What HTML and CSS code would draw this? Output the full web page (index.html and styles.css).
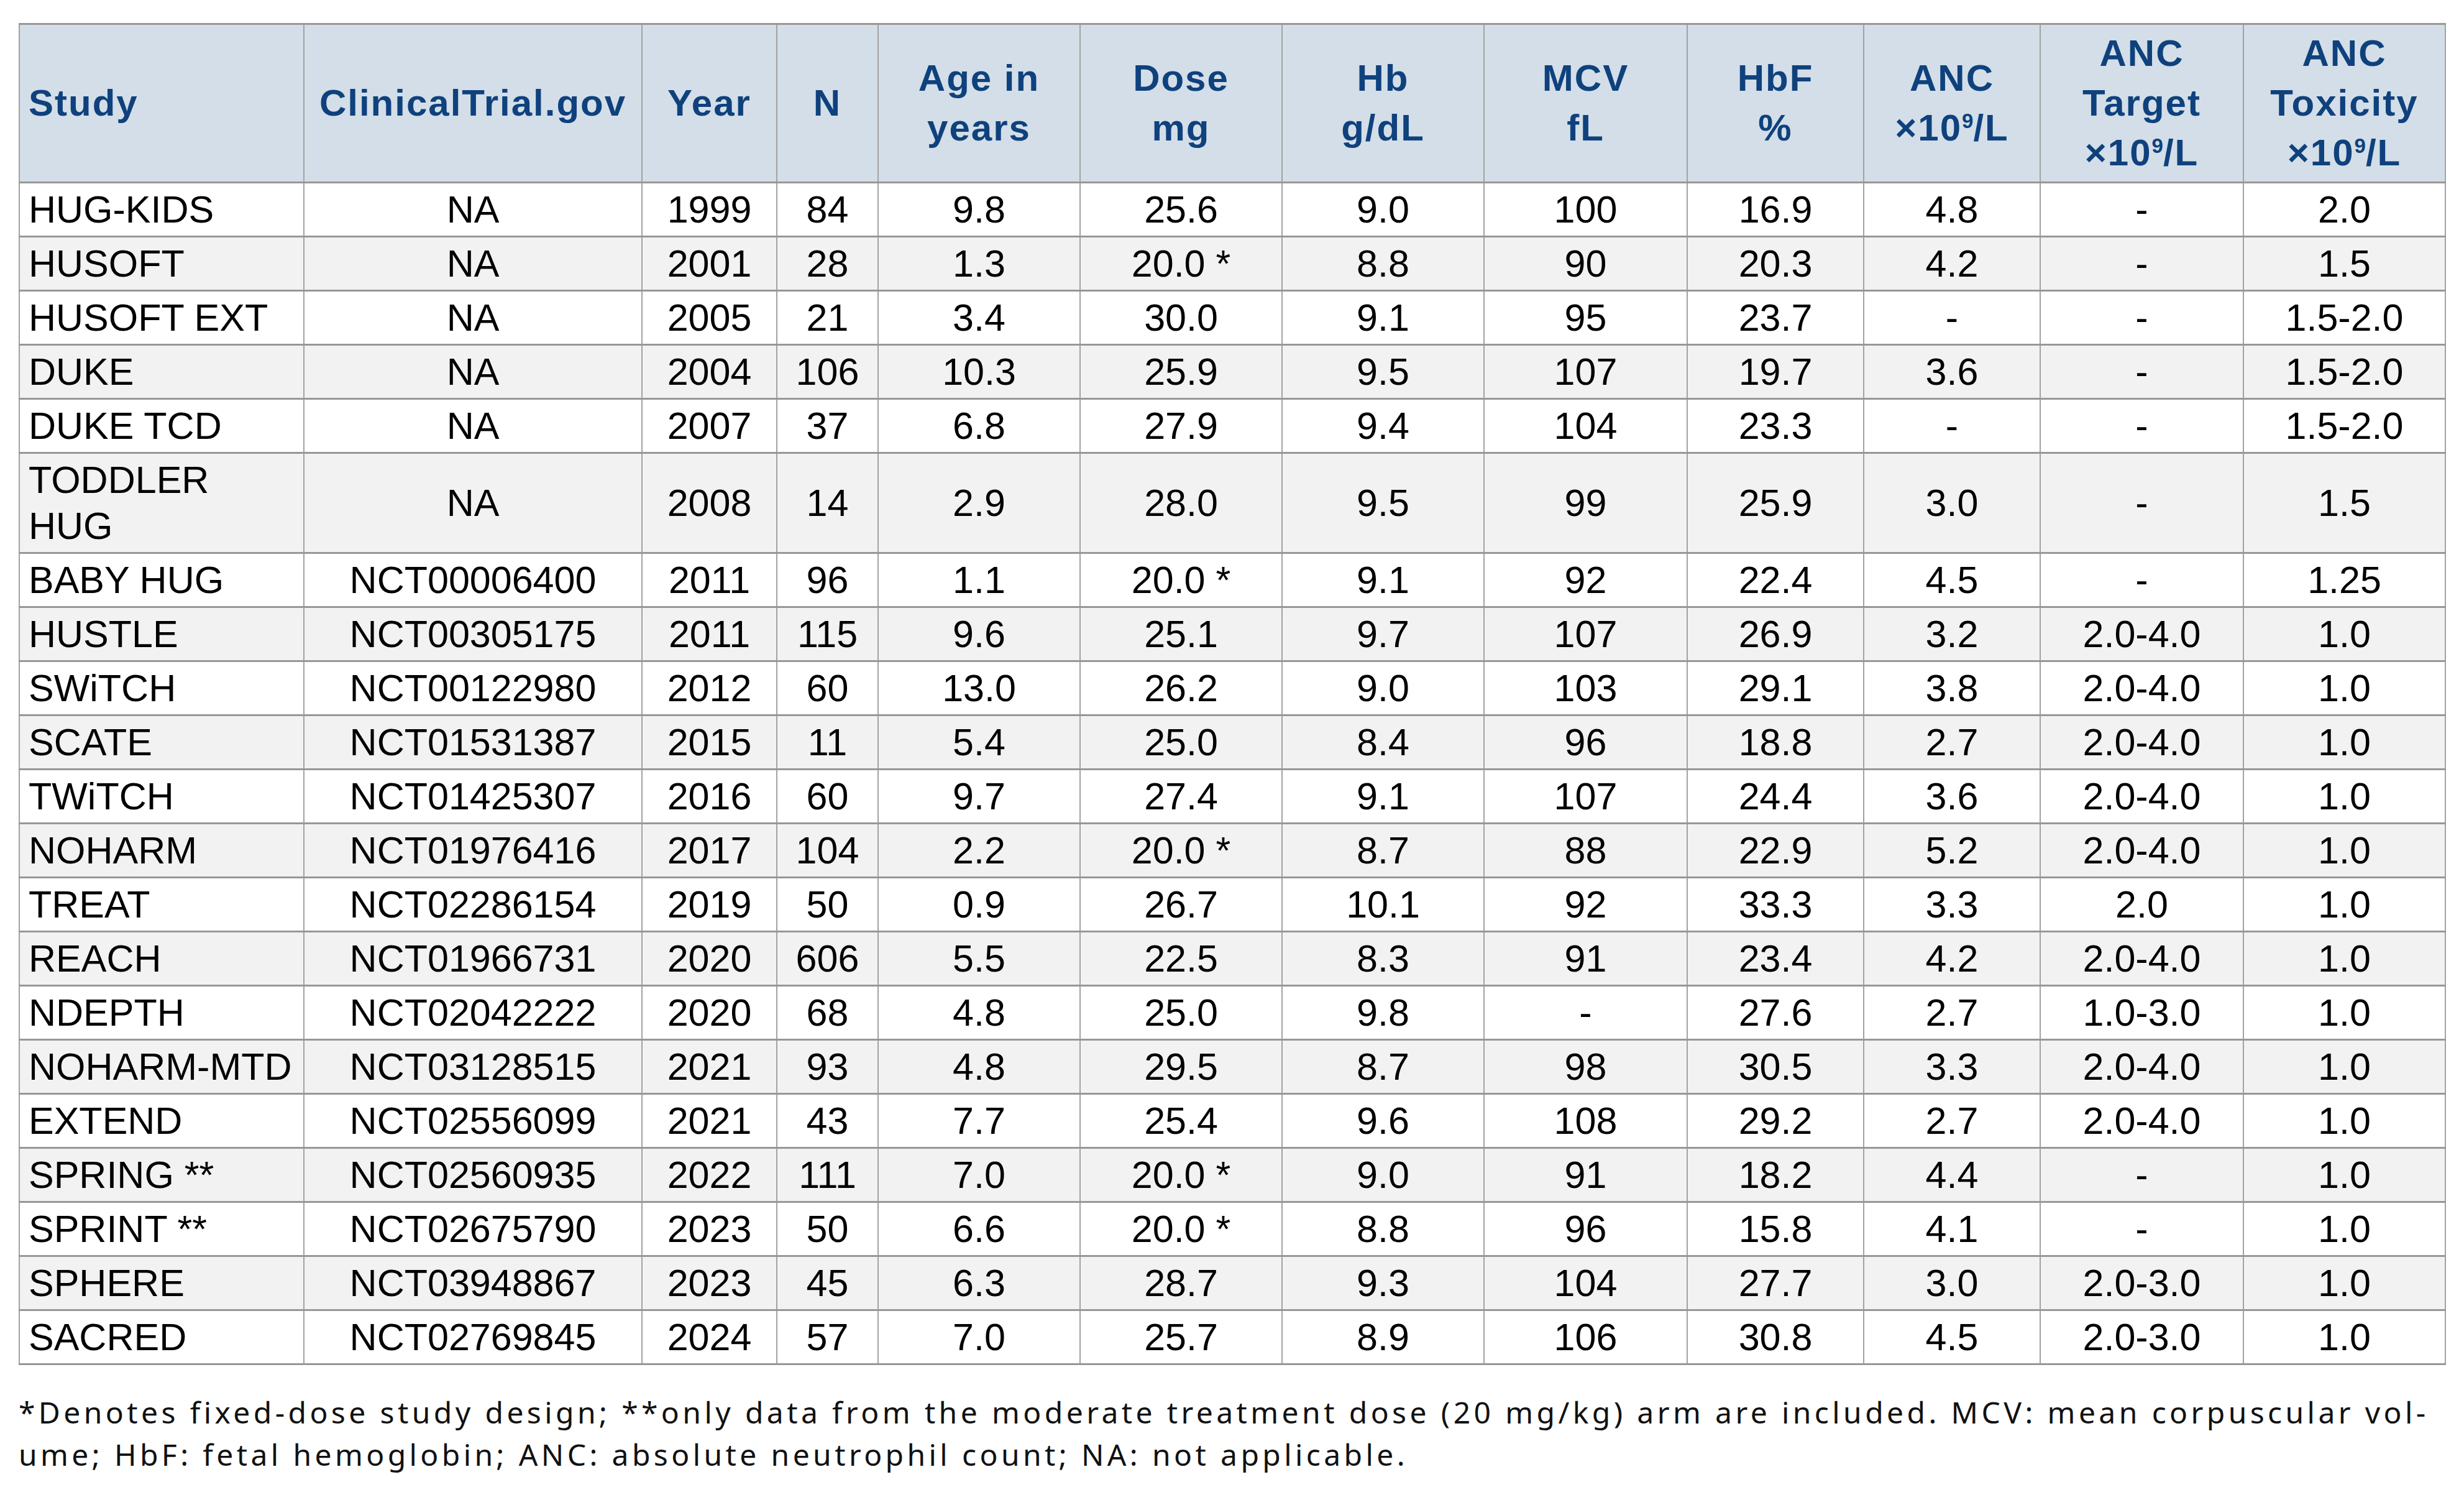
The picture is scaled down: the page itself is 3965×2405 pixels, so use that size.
FILE: index.html
```html
<!DOCTYPE html>
<html lang="en">
<head>
<meta charset="utf-8">
<title>Hydroxyurea pediatric studies</title>
<link rel="stylesheet" href="styles.css">
</head>
<body>
<div class="page">
<table class="trials">
<colgroup>
<col class="c-study"><col class="c-ct"><col class="c-year"><col class="c-n">
<col class="c-age"><col class="c-dose"><col class="c-hb"><col class="c-mcv">
<col class="c-hbf"><col class="c-anc"><col class="c-target"><col class="c-tox">
</colgroup>
<thead>
<tr>
<th class="left">Study</th>
<th>ClinicalTrial.gov</th>
<th>Year</th>
<th>N</th>
<th>Age in<br>years</th>
<th>Dose<br>mg</th>
<th>Hb<br>g/dL</th>
<th>MCV<br>fL</th>
<th>HbF<br>%</th>
<th>ANC<br>×10<sup class="sup">9</sup>/L</th>
<th>ANC<br>Target<br>×10<sup class="sup">9</sup>/L</th>
<th>ANC<br>Toxicity<br>×10<sup class="sup">9</sup>/L</th>
</tr>
</thead>
<tbody>
<tr><td class="left">HUG-KIDS</td><td>NA</td><td>1999</td><td>84</td><td>9.8</td><td>25.6</td><td>9.0</td><td>100</td><td>16.9</td><td>4.8</td><td>-</td><td>2.0</td></tr>
<tr><td class="left">HUSOFT</td><td>NA</td><td>2001</td><td>28</td><td>1.3</td><td>20.0 *</td><td>8.8</td><td>90</td><td>20.3</td><td>4.2</td><td>-</td><td>1.5</td></tr>
<tr><td class="left">HUSOFT EXT</td><td>NA</td><td>2005</td><td>21</td><td>3.4</td><td>30.0</td><td>9.1</td><td>95</td><td>23.7</td><td>-</td><td>-</td><td>1.5-2.0</td></tr>
<tr><td class="left">DUKE</td><td>NA</td><td>2004</td><td>106</td><td>10.3</td><td>25.9</td><td>9.5</td><td>107</td><td>19.7</td><td>3.6</td><td>-</td><td>1.5-2.0</td></tr>
<tr><td class="left">DUKE TCD</td><td>NA</td><td>2007</td><td>37</td><td>6.8</td><td>27.9</td><td>9.4</td><td>104</td><td>23.3</td><td>-</td><td>-</td><td>1.5-2.0</td></tr>
<tr><td class="left">TODDLER HUG</td><td>NA</td><td>2008</td><td>14</td><td>2.9</td><td>28.0</td><td>9.5</td><td>99</td><td>25.9</td><td>3.0</td><td>-</td><td>1.5</td></tr>
<tr><td class="left">BABY HUG</td><td>NCT00006400</td><td>2011</td><td>96</td><td>1.1</td><td>20.0 *</td><td>9.1</td><td>92</td><td>22.4</td><td>4.5</td><td>-</td><td>1.25</td></tr>
<tr><td class="left">HUSTLE</td><td>NCT00305175</td><td>2011</td><td>115</td><td>9.6</td><td>25.1</td><td>9.7</td><td>107</td><td>26.9</td><td>3.2</td><td>2.0-4.0</td><td>1.0</td></tr>
<tr><td class="left">SWiTCH</td><td>NCT00122980</td><td>2012</td><td>60</td><td>13.0</td><td>26.2</td><td>9.0</td><td>103</td><td>29.1</td><td>3.8</td><td>2.0-4.0</td><td>1.0</td></tr>
<tr><td class="left">SCATE</td><td>NCT01531387</td><td>2015</td><td>11</td><td>5.4</td><td>25.0</td><td>8.4</td><td>96</td><td>18.8</td><td>2.7</td><td>2.0-4.0</td><td>1.0</td></tr>
<tr><td class="left">TWiTCH</td><td>NCT01425307</td><td>2016</td><td>60</td><td>9.7</td><td>27.4</td><td>9.1</td><td>107</td><td>24.4</td><td>3.6</td><td>2.0-4.0</td><td>1.0</td></tr>
<tr><td class="left">NOHARM</td><td>NCT01976416</td><td>2017</td><td>104</td><td>2.2</td><td>20.0 *</td><td>8.7</td><td>88</td><td>22.9</td><td>5.2</td><td>2.0-4.0</td><td>1.0</td></tr>
<tr><td class="left">TREAT</td><td>NCT02286154</td><td>2019</td><td>50</td><td>0.9</td><td>26.7</td><td>10.1</td><td>92</td><td>33.3</td><td>3.3</td><td>2.0</td><td>1.0</td></tr>
<tr><td class="left">REACH</td><td>NCT01966731</td><td>2020</td><td>606</td><td>5.5</td><td>22.5</td><td>8.3</td><td>91</td><td>23.4</td><td>4.2</td><td>2.0-4.0</td><td>1.0</td></tr>
<tr><td class="left">NDEPTH</td><td>NCT02042222</td><td>2020</td><td>68</td><td>4.8</td><td>25.0</td><td>9.8</td><td>-</td><td>27.6</td><td>2.7</td><td>1.0-3.0</td><td>1.0</td></tr>
<tr><td class="left">NOHARM-MTD</td><td>NCT03128515</td><td>2021</td><td>93</td><td>4.8</td><td>29.5</td><td>8.7</td><td>98</td><td>30.5</td><td>3.3</td><td>2.0-4.0</td><td>1.0</td></tr>
<tr><td class="left">EXTEND</td><td>NCT02556099</td><td>2021</td><td>43</td><td>7.7</td><td>25.4</td><td>9.6</td><td>108</td><td>29.2</td><td>2.7</td><td>2.0-4.0</td><td>1.0</td></tr>
<tr><td class="left">SPRING **</td><td>NCT02560935</td><td>2022</td><td>111</td><td>7.0</td><td>20.0 *</td><td>9.0</td><td>91</td><td>18.2</td><td>4.4</td><td>-</td><td>1.0</td></tr>
<tr><td class="left">SPRINT **</td><td>NCT02675790</td><td>2023</td><td>50</td><td>6.6</td><td>20.0 *</td><td>8.8</td><td>96</td><td>15.8</td><td>4.1</td><td>-</td><td>1.0</td></tr>
<tr><td class="left">SPHERE</td><td>NCT03948867</td><td>2023</td><td>45</td><td>6.3</td><td>28.7</td><td>9.3</td><td>104</td><td>27.7</td><td>3.0</td><td>2.0-3.0</td><td>1.0</td></tr>
<tr><td class="left">SACRED</td><td>NCT02769845</td><td>2024</td><td>57</td><td>7.0</td><td>25.7</td><td>8.9</td><td>106</td><td>30.8</td><td>4.5</td><td>2.0-3.0</td><td>1.0</td></tr>
</tbody>
</table>
<p class="note">*Denotes fixed-dose study design; **only data from the moderate treatment dose (20 mg/kg) arm are included. MCV: mean corpuscular vol-<br>ume; HbF: fetal hemoglobin; ANC: absolute neutrophil count; NA: not applicable.</p>
</div>
</body>
</html>
```
FILE: styles.css
```css
html, body {
  margin: 0;
  padding: 0;
  background: #ffffff;
}

.page {
  padding: 37px 0 0 30px;
}

.trials {
  border-collapse: collapse;
  table-layout: fixed;
  width: 3905px;
  font-family: "Liberation Sans", Arial, sans-serif;
  font-size: 61px;
  color: #000000;
}

.c-study { width: 458px; }
.c-ct { width: 544px; }
.c-year { width: 217px; }
.c-n { width: 163px; }
.c-age { width: 325px; }
.c-dose { width: 325px; }
.c-hb { width: 325px; }
.c-mcv { width: 327px; }
.c-hbf { width: 284px; }
.c-anc { width: 284px; }
.c-target { width: 327px; }
.c-tox { width: 325px; }

.trials th,
.trials td {
  border-left: 2px solid #a2a2a2;
  border-right: 2px solid #a2a2a2;
  border-top: 3px solid #979797;
  border-bottom: 3px solid #979797;
  text-align: center;
  vertical-align: middle;
  padding: 5px 14px;
}

.trials th {
  background: #d3dee8;
  color: #0f417d;
  font-weight: bold;
  font-size: 60px;
  letter-spacing: 2px;
  line-height: 80px;
  padding-top: 6px;
  padding-bottom: 6px;
}

.trials td {
  line-height: 74px;
}

.trials .left {
  text-align: left;
}

.trials tbody tr:nth-child(even) td {
  background: #f2f2f2;
}

.sup {
  font-size: 0.55em;
  line-height: 0;
  vertical-align: 0.6em;
  letter-spacing: 0;
}

.note {
  margin: 42px 0 0 0;
  font-family: "Noto Sans", "DejaVu Sans", sans-serif;
  font-size: 48px;
  line-height: 68px;
  letter-spacing: 5.4px;
  white-space: nowrap;
  color: #111111;
}
```
